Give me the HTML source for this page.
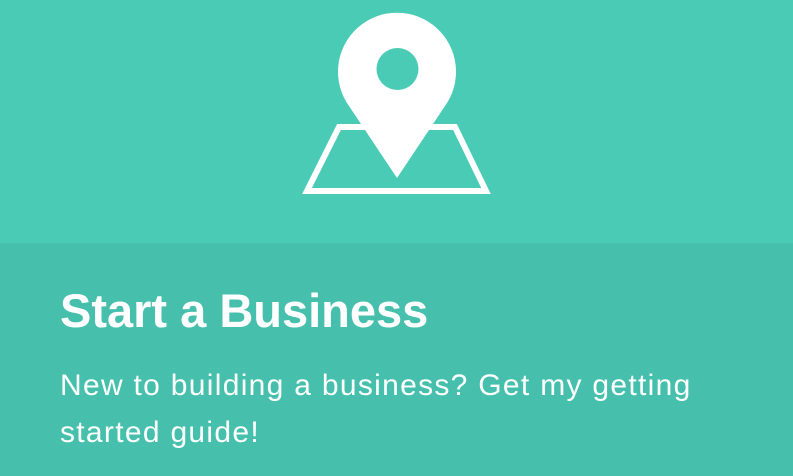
<!DOCTYPE html>
<html><head><style>
html,body{margin:0;padding:0}
body{width:793px;height:476px;overflow:hidden;background:#46c0ac;position:relative;font-family:"Liberation Sans",sans-serif;color:#fff}
.top{position:absolute;left:0;top:0;width:793px;height:243px;background:#4acbb5}
h1{position:absolute;left:60px;top:283px;margin:0;font-size:47px;font-weight:bold;line-height:56px;white-space:nowrap}
p{position:absolute;left:60px;top:362px;margin:0;font-size:30px;letter-spacing:1.3px;line-height:47px;width:680px}
svg{position:absolute;left:0;top:0}
</style></head><body>
<div class="top"></div>
<svg width="793" height="243" viewBox="0 0 793 243">
<polygon points="339,127 455,127 486,191 307,191" fill="none" stroke="#fff" stroke-width="6"/>
<path d="M397,178 L349,106 A59,59 0 1 1 445,106 Z" fill="#fff"/>
<circle cx="397.5" cy="69" r="21" fill="#4acbb5"/>
</svg>
<h1>Start a Business</h1>
<p>New to building a business? Get my getting<br>started guide!</p>
</body></html>
